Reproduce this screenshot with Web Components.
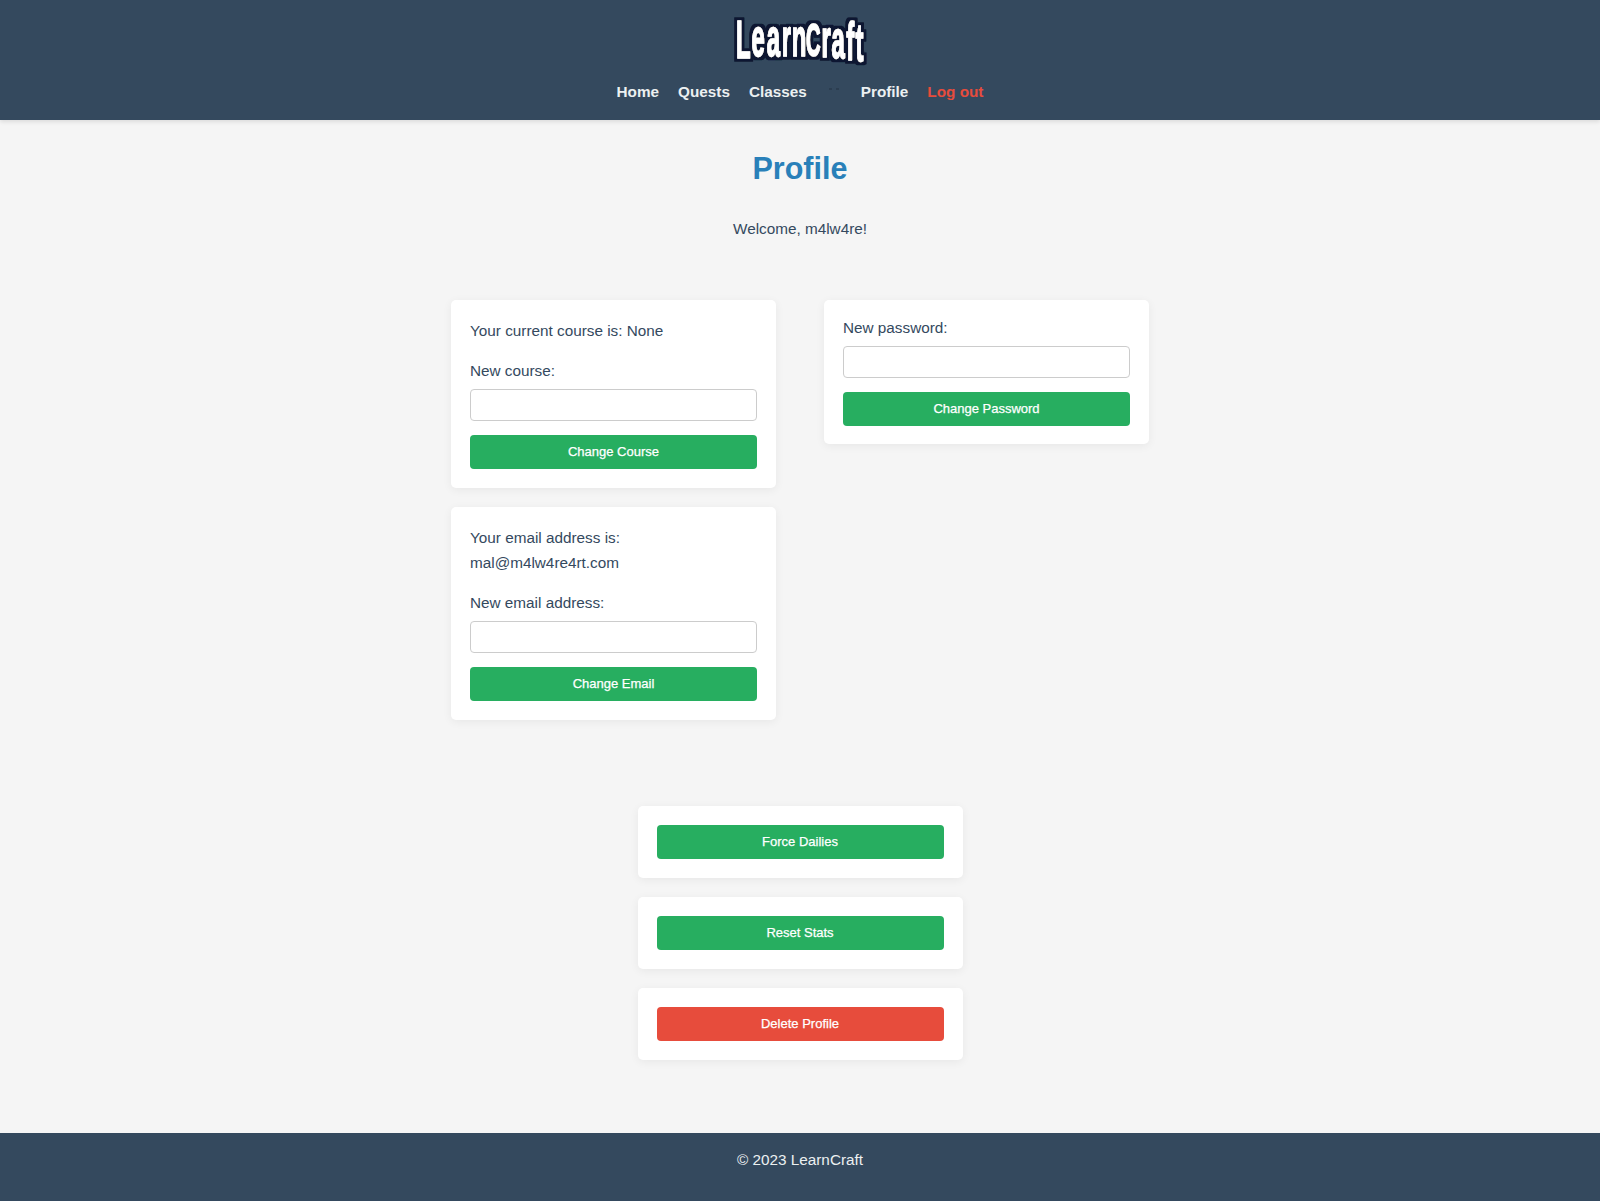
<!DOCTYPE html>
<html lang="en">
<head>
<meta charset="utf-8">
<title>LearnCraft</title>
<style>
  html, body { margin: 0; padding: 0; }
  body {
    background: #f5f5f5;
    color: #34495e;
    font-family: "Liberation Sans", Arial, sans-serif;
    font-size: 15.3px;
    line-height: 1.6;
  }
</style>
</head>
<body>
<lc-header>
  <lc-link href="#">Home</lc-link>
  <lc-link href="#">Quests</lc-link>
  <lc-link href="#">Classes</lc-link>
  <lc-mark></lc-mark>
  <lc-link href="#">Profile</lc-link>
  <lc-link href="#" danger>Log out</lc-link>
</lc-header>

<lc-page>
  <h1 slot="title">Profile</h1>
  <p slot="welcome">Welcome, m4lw4re!</p>

  <lc-card slot="left">
    <p>Your current course is: None</p>
    <lc-form label="New course:" action="Change Course"></lc-form>
  </lc-card>
  <lc-card slot="left">
    <p>Your email address is: mal@m4lw4re4rt.com</p>
    <lc-form label="New email address:" action="Change Email"></lc-form>
  </lc-card>
  <lc-card slot="right" tight>
    <lc-form label="New password:" action="Change Password"></lc-form>
  </lc-card>

  <lc-card slot="actions"><lc-button>Force Dailies</lc-button></lc-card>
  <lc-card slot="actions"><lc-button>Reset Stats</lc-button></lc-card>
  <lc-card slot="actions"><lc-button danger>Delete Profile</lc-button></lc-card>
</lc-page>

<lc-footer>© 2023 LearnCraft</lc-footer>

<script>
class LcLink extends HTMLElement {
  constructor() {
    super();
    this.attachShadow({ mode: 'open' });
    this.shadowRoot.innerHTML = `
    <style>
      :host { display: block; }
      a { color: #ecf0f1; font-weight: bold; text-decoration: none; font-size: 15.3px; line-height: 26px; }
      :host([danger]) a { color: #e74c3c; }
    </style>
    <a><slot></slot></a>`;
    this.shadowRoot.querySelector('a').href = this.getAttribute('href') || '#';
  }
}

// the nearly invisible item between Classes and Profile
class LcMark extends HTMLElement {
  constructor() {
    super();
    this.attachShadow({ mode: 'open' });
    this.shadowRoot.innerHTML = `
    <style>
      :host { display: block; width: 16px; height: 26px; }
      svg { display: block; }
    </style>
    <svg width="16" height="26" viewBox="0 0 16 26">
      <path d="M3 10h3M10 10h3" stroke="#2b3d50" stroke-width="2" fill="none"/>
    </svg>`;
  }
}

class LcHeader extends HTMLElement {
  constructor() {
    super();
    this.attachShadow({ mode: 'open' });
    this.shadowRoot.innerHTML = `
    <style>
      :host { display: block; background: #34495e; height: 120px; box-shadow: 0 2px 4px rgba(0,0,0,.1); position: relative; }
      .logo { display: flex; justify-content: center; height: 72px; }
      svg { display: block; }
      text { font-family: "Liberation Sans", sans-serif; font-weight: bold; font-size: 45px; fill: #fff; stroke: #fff; stroke-width: 1.2; stroke-linejoin: round; }
      nav { display: flex; justify-content: center; gap: 19px; padding-top: 7px; }
    </style>
    <div class="logo">
      <svg width="150" height="72" viewBox="0 0 150 72">
        <defs>
          <filter id="outline" filterUnits="userSpaceOnUse" x="0" y="0" width="150" height="72">
            <feMorphology in="SourceAlpha" operator="dilate" radius="3" result="fat"/>
            <feGaussianBlur in="fat" stdDeviation=".5" result="soft"/>
            <feFlood flood-color="#0b1830"/>
            <feComposite in2="soft" operator="in" result="edge"/>
            <feMerge><feMergeNode in="edge"/><feMergeNode in="SourceGraphic"/></feMerge>
          </filter>
        </defs>
        <g filter="url(#outline)">
          <text transform="scale(.53 1.2)"
            x="21 50 79 107 126 153 182 201 229 246"
            y="48 47 47 47 47 47 47.5 48 50 51"><tspan>L</tspan>earn<tspan font-size="38">C</tspan>raft</text>
        </g>
      </svg>
    </div>
    <nav><slot></slot></nav>`;
  }
}

class LcPage extends HTMLElement {
  constructor() {
    super();
    this.attachShadow({ mode: 'open' });
    this.shadowRoot.innerHTML = `
    <style>
      :host { display: block; height: 1013px; box-sizing: border-box; padding-top: 27px; }
      .head { text-align: center; }
      ::slotted(h1) { margin: 0; color: #2980b9; font-size: 30.5px; line-height: 42px; font-weight: bold; text-align: center; }
      ::slotted(p) { margin: 27px 0 0; text-align: center; line-height: 26px; }
      .columns { display: flex; justify-content: center; align-items: flex-start; gap: 48px; margin-top: 58px; }
      .col { width: 325px; display: flex; flex-direction: column; gap: 19px; }
      .actions { width: 325px; margin: 86px auto 0; display: flex; flex-direction: column; gap: 19px; }
    </style>
    <div class="head"><slot name="title"></slot><slot name="welcome"></slot></div>
    <div class="columns">
      <div class="col"><slot name="left"></slot></div>
      <div class="col"><slot name="right"></slot></div>
    </div>
    <div class="actions"><slot name="actions"></slot></div>`;
  }
}

class LcCard extends HTMLElement {
  constructor() {
    super();
    this.attachShadow({ mode: 'open' });
    this.shadowRoot.innerHTML = `
    <style>
      :host { display: block; background: #fff; border-radius: 5px; padding: 19px; box-shadow: 0 2px 10px rgba(0,0,0,.06); }
      :host([tight]) { padding-top: 15px; padding-bottom: 18px; }
      ::slotted(p) { margin: -1px 0 15px; line-height: 25px; }
    </style>
    <slot></slot>`;
  }
}

class LcForm extends HTMLElement {
  constructor() {
    super();
    this.attachShadow({ mode: 'open' });
    this.shadowRoot.innerHTML = `
    <style>
      :host { display: block; }
      label { display: block; line-height: 25px; margin-bottom: 6px; }
      input { display: block; box-sizing: border-box; width: 100%; height: 32px; margin: 0 0 14px; padding: 8px; border: 1px solid #ccc; border-radius: 4px; background: #fff; font: inherit; }
    </style>
    <label></label>
    <input type="text">
    <lc-button></lc-button>`;
    this.shadowRoot.querySelector('label').textContent = this.getAttribute('label');
    this.shadowRoot.querySelector('lc-button').textContent = this.getAttribute('action');
  }
}

class LcButton extends HTMLElement {
  constructor() {
    super();
    this.attachShadow({ mode: 'open' });
    this.shadowRoot.innerHTML = `
    <style>
      :host { display: block; }
      button { display: block; box-sizing: border-box; width: 100%; height: 34px; padding: 0 0 2px; border: 0; border-radius: 4px; background: #27ae60; color: #fff; font-family: "Liberation Sans", sans-serif; font-size: 13px; font-weight: normal; -webkit-text-stroke: .25px #fff; cursor: pointer; }
      :host([danger]) button { background: #e74c3c; }
    </style>
    <button type="button"><slot></slot></button>`;
  }
}

class LcFooter extends HTMLElement {
  constructor() {
    super();
    this.attachShadow({ mode: 'open' });
    this.shadowRoot.innerHTML = `
    <style>
      :host { display: block; height: 68px; box-sizing: border-box; padding-top: 14px; background: #34495e; color: #ecf0f1; text-align: center; line-height: 26px; }
    </style>
    <slot></slot>`;
  }
}

customElements.define('lc-link', LcLink);
customElements.define('lc-mark', LcMark);
customElements.define('lc-header', LcHeader);
customElements.define('lc-page', LcPage);
customElements.define('lc-card', LcCard);
customElements.define('lc-button', LcButton);
customElements.define('lc-form', LcForm);
customElements.define('lc-footer', LcFooter);
</script>
</body>
</html>
